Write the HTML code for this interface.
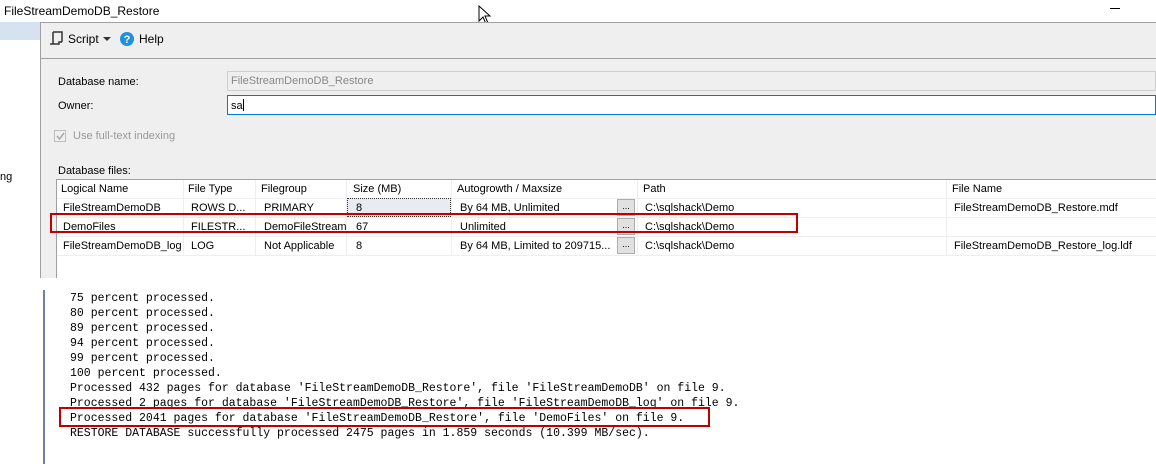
<!DOCTYPE html>
<html><head><style>
*{margin:0;padding:0;box-sizing:border-box}
body{width:1156px;height:464px;background:#fff;position:relative;overflow:hidden;font-family:"Liberation Sans",sans-serif;font-size:11px;color:#000}
.a{position:absolute;white-space:nowrap}
.mono{font-family:"Liberation Mono",monospace;font-size:11.5px;color:#000}
.cell{position:absolute;font-size:11px;white-space:nowrap}
.btn{position:absolute;width:18px;height:17px;background:#e1e1e1;border:1px solid #adadad;font-size:9px;text-align:center;line-height:12px}
</style></head><body>
<div class="a" style="left:4px;top:4px;font-size:12px">FileStreamDemoDB_Restore</div>
<div class="a" style="left:1110px;top:8px;width:10px;height:1px;background:#000"></div>
<svg class="a" style="left:478px;top:5px" width="14" height="20" viewBox="0 0 14 20"><path d="M1 1 L1 16 L5 12 L8 19 L10 18 L7 11 L12 11 Z" fill="#fff" stroke="#000" stroke-width="1"/></svg>
<div class="a" style="left:0;top:22px;width:40px;height:18px;background:#d5e3f0"></div>
<div class="a" style="left:0;top:171px;font-size:11px">ng</div>
<div class="a" style="left:40px;top:22px;width:1116px;height:256px;background:#efefef;border-top:1px solid #a0a0a0;border-left:1px solid #a0a0a0"></div>
<div class="a" style="left:40px;top:58px;width:1116px;height:1px;background:#a0a0a0"></div>
<svg class="a" style="left:49px;top:31px" width="14" height="15" viewBox="0 0 14 15"><path d="M4 1 H13 V11 M4 1 V13 H1 M4 13 H10 V11 H13" fill="none" stroke="#333" stroke-width="1.5"/></svg>
<div class="a" style="left:68px;top:32px;font-size:12px">Script</div>
<svg class="a" style="left:103px;top:37px" width="8" height="5"><path d="M0 0 H8 L4 4 Z" fill="#333"/></svg>
<svg class="a" style="left:120px;top:32px" width="14" height="14"><circle cx="7" cy="7" r="7" fill="#1e90e0"/><text x="7" y="11" font-size="11" font-weight="bold" fill="#fff" text-anchor="middle" font-family="Liberation Sans">?</text></svg>
<div class="a" style="left:139px;top:32px;font-size:12px">Help</div>
<div class="a" style="left:58px;top:76px">Database name:</div>
<div class="a" style="left:227px;top:71px;width:929px;height:20px;border:1px solid #cfcfcf;background:#efefef;color:#888;padding:3px 0 0 3px">FileStreamDemoDB_Restore</div>
<div class="a" style="left:58px;top:100px">Owner:</div>
<div class="a" style="left:227px;top:95px;width:929px;height:20px;border:1px solid #0078d7;background:#fff;padding:3px 0 0 3px">sa<span style="display:inline-block;width:1px;height:12px;background:#000;vertical-align:-2px"></span></div>
<div class="a" style="left:54px;top:130px;width:12px;height:12px;border:1px solid #c0c0c0;background:#efefef"></div>
<svg class="a" style="left:55px;top:131px" width="11" height="11"><path d="M2 5 L4.5 8 L9 2" fill="none" stroke="#aaa" stroke-width="1.5"/></svg>
<div class="a" style="left:73px;top:130px;color:#999">Use full-text indexing</div>
<div class="a" style="left:58px;top:165px">Database files:</div>
<div class="a" style="left:56px;top:179px;width:1100px;height:99px;background:#fff;border-left:1px solid #a0a0a0;border-top:1px solid #a0a0a0"></div>
<div class="a" style="left:57px;top:198px;width:1099px;height:1px;background:#eee"></div>
<div class="a" style="left:57px;top:217px;width:1099px;height:1px;background:#eee"></div>
<div class="a" style="left:57px;top:236px;width:1099px;height:1px;background:#eee"></div>
<div class="a" style="left:57px;top:255px;width:1099px;height:1px;background:#eee"></div>
<div class="a" style="left:183px;top:180px;width:1px;height:76px;background:#eee"></div>
<div class="a" style="left:255px;top:180px;width:1px;height:76px;background:#eee"></div>
<div class="a" style="left:346px;top:180px;width:1px;height:76px;background:#eee"></div>
<div class="a" style="left:451px;top:180px;width:1px;height:76px;background:#eee"></div>
<div class="a" style="left:637px;top:180px;width:1px;height:76px;background:#eee"></div>
<div class="a" style="left:946px;top:180px;width:1px;height:76px;background:#eee"></div>
<div class="cell" style="left:61px;top:183px">Logical Name</div>
<div class="cell" style="left:188px;top:183px">File Type</div>
<div class="cell" style="left:261px;top:183px">Filegroup</div>
<div class="cell" style="left:353px;top:183px">Size (MB)</div>
<div class="cell" style="left:457px;top:183px">Autogrowth / Maxsize</div>
<div class="cell" style="left:643px;top:183px">Path</div>
<div class="cell" style="left:952px;top:183px">File Name</div>
<div class="a" style="left:347px;top:198px;width:104px;height:19px;background:#e8ecf0;border:1px dotted #333"></div>
<div class="cell" style="left:63px;top:202px">FileStreamDemoDB</div>
<div class="cell" style="left:191px;top:202px">ROWS D...</div>
<div class="cell" style="left:264px;top:202px">PRIMARY</div>
<div class="cell" style="left:356px;top:202px">8</div>
<div class="cell" style="left:460px;top:202px">By 64 MB, Unlimited</div>
<div class="btn" style="left:617px;top:199px">...</div>
<div class="cell" style="left:645px;top:202px">C:\sqlshack\Demo</div>
<div class="cell" style="left:954px;top:202px">FileStreamDemoDB_Restore.mdf</div>
<div class="cell" style="left:63px;top:221px">DemoFiles</div>
<div class="cell" style="left:191px;top:221px">FILESTR...</div>
<div class="cell" style="left:264px;top:221px">DemoFileStream</div>
<div class="cell" style="left:356px;top:221px">67</div>
<div class="cell" style="left:460px;top:221px">Unlimited</div>
<div class="btn" style="left:617px;top:218px">...</div>
<div class="cell" style="left:645px;top:221px">C:\sqlshack\Demo</div>
<div class="cell" style="left:63px;top:240px">FileStreamDemoDB_log</div>
<div class="cell" style="left:191px;top:240px">LOG</div>
<div class="cell" style="left:264px;top:240px">Not Applicable</div>
<div class="cell" style="left:356px;top:240px">8</div>
<div class="cell" style="left:460px;top:240px">By 64 MB, Limited to 209715...</div>
<div class="btn" style="left:617px;top:237px">...</div>
<div class="cell" style="left:645px;top:240px">C:\sqlshack\Demo</div>
<div class="cell" style="left:954px;top:240px">FileStreamDemoDB_Restore_log.ldf</div>
<div class="a" style="left:50px;top:213px;width:748px;height:20px;border:2px solid #c00000"></div>
<div class="a" style="left:43px;top:290px;width:2px;height:174px;background:#7080a0"></div>
<div class="a mono" style="left:70px;top:291px;line-height:15px">75 percent processed.<br>80 percent processed.<br>89 percent processed.<br>94 percent processed.<br>99 percent processed.<br>100 percent processed.<br>Processed 432 pages for database 'FileStreamDemoDB_Restore', file 'FileStreamDemoDB' on file 9.<br>Processed 2 pages for database 'FileStreamDemoDB_Restore', file 'FileStreamDemoDB_log' on file 9.<br>Processed 2041 pages for database 'FileStreamDemoDB_Restore', file 'DemoFiles' on file 9.<br>RESTORE DATABASE successfully processed 2475 pages in 1.859 seconds (10.399 MB/sec).</div>
<div class="a" style="left:59px;top:407px;width:651px;height:20px;border:2px solid #c00000"></div>
</body></html>
